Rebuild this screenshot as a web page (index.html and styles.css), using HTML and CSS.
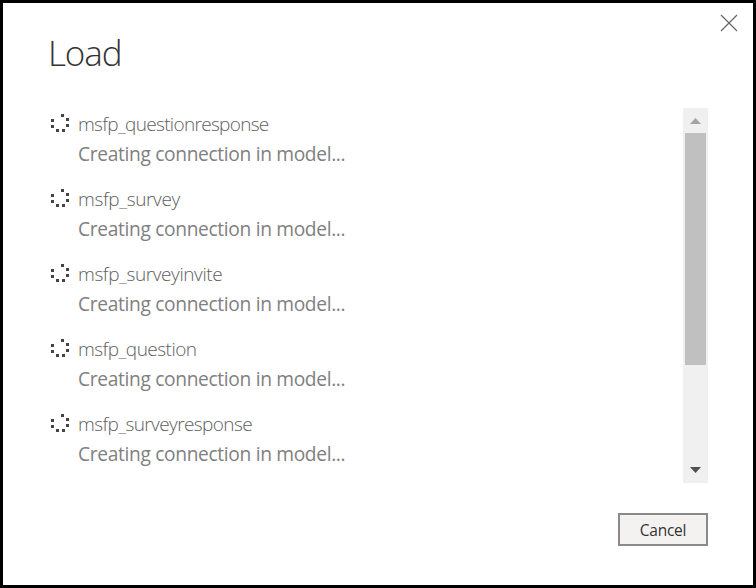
FILE: index.html
```
<!DOCTYPE html>
<html lang="en">
<head>
<meta charset="utf-8">
<title>Load</title>
<link rel="stylesheet" href="styles.css">
</head>
<body>
<svg width="0" height="0" class="defs">
  <symbol id="spinner" viewBox="0 0 18 18">
    <path fill="#444" d="M10 0h3v3h-3zM15 4h3v3h-3zM15 10h3v3h-3zM11 15h3v3h-3zM5 15h3v3h-3zM0 11h3v3h-3zM0 5h3v3h-3z"/>
  </symbol>
</svg>
<main class="dialog">
  <button class="close" aria-label="Close"><svg width="18" height="18" viewBox="0 0 18 18"><path d="M1 1l16 16M17 1L1 17" stroke="#666" stroke-width="1.2"/></svg></button>
  <h1 class="title">Load</h1>
  <div class="content">
    <ul class="list">
      <li class="item"><svg class="spinner"><use href="#spinner"/></svg><div><div class="name n1">msfp_questionresponse</div><div class="status">Creating connection in model...</div></div></li>
      <li class="item"><svg class="spinner"><use href="#spinner"/></svg><div><div class="name n2">msfp_survey</div><div class="status">Creating connection in model...</div></div></li>
      <li class="item"><svg class="spinner"><use href="#spinner"/></svg><div><div class="name n3">msfp_surveyinvite</div><div class="status">Creating connection in model...</div></div></li>
      <li class="item"><svg class="spinner"><use href="#spinner"/></svg><div><div class="name n4">msfp_question</div><div class="status">Creating connection in model...</div></div></li>
      <li class="item"><svg class="spinner"><use href="#spinner"/></svg><div><div class="name n5">msfp_surveyresponse</div><div class="status">Creating connection in model...</div></div></li>
    </ul>
    <div class="scrollbar">
      <svg class="arrow" viewBox="0 0 25 25"><path d="M7 16L12.5 10L18 16z" fill="#a3a3a3"/></svg>
      <div class="thumb"></div>
      <svg class="arrow down" viewBox="0 0 25 25"><path d="M7 9L12.5 15L18 9z" fill="#505050"/></svg>
    </div>
  </div>
  <footer class="footer"><button class="cancel">Cancel</button></footer>
</main>
</body>
</html>
```
FILE: styles.css
```
* { box-sizing: border-box; }
body { margin: 0; font-family: "Open Sans", "Noto Sans", sans-serif; }
.defs { position: absolute; }
.dialog { position: relative; width: 756px; height: 588px; border: 3px solid #000; background: #fff; padding: 25px 45px 0; overflow: hidden; }
.close { position: absolute; top: 11px; right: 15px; width: 18px; height: 18px; padding: 0; border: 0; background: none; }
.close svg { display: block; }
.title { margin: 0; height: 80px; line-height: 50px; font-size: 35px; font-weight: 300; color: #333; letter-spacing: -1.1px; }
.content { display: flex; justify-content: space-between; height: 375px; }
.list { list-style: none; margin: 0; padding: 0; }
.item { display: flex; height: 75px; padding-left: 3px; white-space: nowrap; }
.spinner { width: 18px; height: 18px; margin: 6px 9px 0 0; flex: none; }
.name { height: 30px; line-height: 32px; font-size: 19px; font-weight: 300; color: #606060; }
.n1 { letter-spacing: -0.68px; }
.n2 { letter-spacing: -0.36px; }
.n3 { letter-spacing: -0.4px; }
.n4 { letter-spacing: -0.52px; }
.n5 { letter-spacing: -0.6px; }
.status { height: 30px; line-height: 32px; font-size: 19.2px; color: #808080; letter-spacing: -0.34px; }
.scrollbar { display: flex; flex-direction: column; width: 25px; height: 375px; background: #f0f0f0; }
.arrow { display: block; width: 25px; height: 25px; flex: none; }
.thumb { width: 21px; height: 232px; margin-left: 2px; background: #c0c0c0; }
.down { margin-top: auto; }
.footer { display: flex; justify-content: flex-end; padding-top: 30px; }
.cancel { width: 90px; height: 33px; padding: 2px 0 0; border: 2px solid #8a8a8a; background: #f3f2f1; font: 15.5px/27px "Open Sans", "Noto Sans", sans-serif; color: #333; letter-spacing: -0.25px; }
```
